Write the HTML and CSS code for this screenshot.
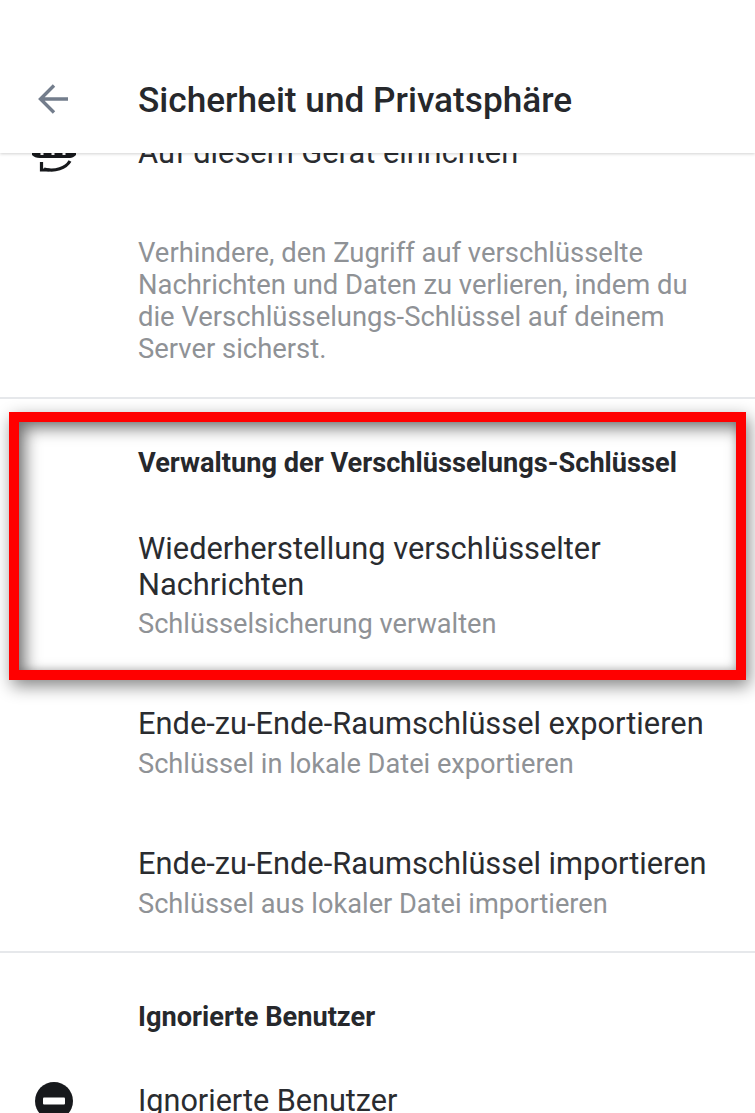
FILE: index.html
```html
<!DOCTYPE html>
<html>
<head>
  <title>Sicherheit und Privatsphäre</title>
  <link rel="stylesheet" href="styles.css">
</head>

<body>

<div class="screen">
  <div class="toolbar">
    <svg class="back" width="36" height="36" viewBox="0 0 36 36">
      <path d="M33 17H6M19 3.500L5.500 17L19 30.500" fill="none" stroke="#737d8c" stroke-width="3.400"/>
    </svg>
    <h1>Sicherheit und Privatsphäre</h1>
  </div>

  <div class="list">
    <div class="row row-first">
      <svg class="icon icon-sync" width="46" height="46" viewBox="0 0 46 46">
        <path d="M1 0h44v25c-2 2-4 3-6 3H9c-4 0-6-1-8-3z" fill="#17191c"/>
        <path d="M9.500 23h3v2h-3zM20.500 23h3v2h-3zM31.500 23h3v2h-3z" fill="#fff"/>
        <path d="M39 31c-4 7-15 11-26 8" fill="none" stroke="#17191c" stroke-width="3.200"/>
        <path d="M10.500 32v8h8" fill="none" stroke="#17191c" stroke-width="3.200"/>
      </svg>
      <div class="row-title">Auf diesem Gerät einrichten</div>
    </div>

    <p class="info">Verhindere, den Zugriff auf verschlüsselte Nachrichten und Daten zu verlieren, indem du die Verschlüsselungs-Schlüssel auf deinem Server sicherst.</p>

    <div class="section">
      <h2>Verwaltung der Verschlüsselungs-Schlüssel</h2>
      <div class="row row-restore">
        <div class="row-title">Wiederherstellung verschlüsselter Nachrichten</div>
        <div class="row-sub">Schlüsselsicherung verwalten</div>
      </div>
      <div class="row row-key">
        <div class="row-title">Ende-zu-Ende-Raumschlüssel exportieren</div>
        <div class="row-sub">Schlüssel in lokale Datei exportieren</div>
      </div>
      <div class="row row-key">
        <div class="row-title">Ende-zu-Ende-Raumschlüssel importieren</div>
        <div class="row-sub">Schlüssel aus lokaler Datei importieren</div>
      </div>
    </div>

    <div class="section">
      <h2>Ignorierte Benutzer</h2>
      <div class="row row-ignored">
        <svg class="icon" width="38" height="38" viewBox="0 0 38 38">
          <circle cx="19" cy="19" r="19" fill="#17191c"/>
          <rect x="8" y="15.500" width="22" height="7" rx="1" fill="#fff"/>
        </svg>
        <div class="row-title">Ignorierte Benutzer</div>
      </div>
    </div>
  </div>

  <div class="highlight"></div>
</div>

</body>
</html>
```

FILE: styles.css
```css
*{
  box-sizing: border-box;
}

html, body{
  margin: 0;
  height: 100%;
  background-color: #fff;
}

.screen{
  position: relative;
  height: 1113px;
  overflow: hidden;
  font-family: Roboto, "Noto Sans", sans-serif;
  color: #17191c;
}

.toolbar{
  position: relative;
  z-index: 2;
  display: flex;
  align-items: center;
  height: 153px;
  padding: 46px 0 0 35px;
  background-color: #fff;
  box-shadow: 0 1px 3px rgba(0,0,0,0.18);
}

.back{
  flex: none;
  margin-right: 67px;
}

.toolbar h1{
  margin: 0;
  font-size: 35.200px;
  font-weight: 500;
  color: #26282c;
}

.list{
  margin-top: -23px;
}

.row{
  position: relative;
  padding-left: 138px;
}

.icon{
  position: absolute;
  left: 35px;
}

.icon-sync{
  left: 31px;
  top: 0;
}

.row-title{
  font-size: 30.800px;
  line-height: 36px;
  color: #2a2c30;
}

.row-sub{
  margin-top: 6px;
  font-size: 27.200px;
  line-height: 32px;
  color: #8f9296;
}

.row-first{
  height: 107px;
  padding-top: 5px;
}

.info{
  margin: 0;
  padding: 0 40px 32px 138px;
  font-size: 27.400px;
  line-height: 32px;
  color: #8f9296;
}

.section{
  border-top: 2px solid #e6e8eb;
  padding-top: 48px;
}

.section h2{
  margin: 0;
  padding-left: 138px;
  font-size: 27.200px;
  line-height: 32px;
  font-weight: 700;
  color: #26282c;
}

.row-restore{
  margin-top: 52px;
}

.row-restore .row-sub{
  margin-top: 5px;
}

.row-key{
  margin-top: 66px;
}

.row-key:last-child{
  padding-bottom: 31px;
}

.row-ignored{
  margin-top: 50px;
}

.row-ignored .icon{
  top: -1px;
}

.row-ignored .row-title{
  font-size: 30.600px;
}

.highlight{
  position: absolute;
  left: 9px;
  top: 412px;
  width: 737px;
  height: 268px;
  border: 10px solid #f00;
  box-shadow: 3px 6px 16px rgba(0,0,0,0.48), inset 6px 6px 16px rgba(0,0,0,0.55), inset -1px -1px 6px rgba(0,0,0,0.12);
}
```
